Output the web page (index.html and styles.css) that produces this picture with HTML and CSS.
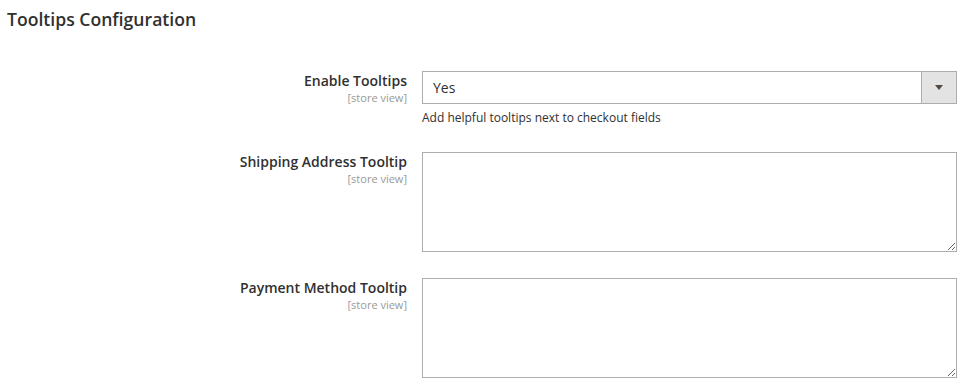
FILE: index.html
```html
<!DOCTYPE html>
<html>

<head>
    <title>Tooltips Configuration</title>
    <link rel="stylesheet" href="styles.css">
</head>

<body>
    <div class="section">
        <h2 class="section-title">Tooltips Configuration</h2>

        <div class="row">
            <div class="label">
                <span>Enable Tooltips</span>
                <span class="scope">[store view]</span>
            </div>
            <div class="value">
                <div class="select">
                    <span class="select-text">Yes</span>
                    <span class="select-btn"><span class="arrow"></span></span>
                </div>
                <p class="note">Add helpful tooltips next to checkout fields</p>
            </div>
        </div>

        <div class="row">
            <div class="label">
                <span>Shipping Address Tooltip</span>
                <span class="scope">[store view]</span>
            </div>
            <div class="value">
                <textarea class="textarea"></textarea>
            </div>
        </div>

        <div class="row">
            <div class="label">
                <span>Payment Method Tooltip</span>
                <span class="scope">[store view]</span>
            </div>
            <div class="value">
                <textarea class="textarea"></textarea>
            </div>
        </div>
    </div>
</body>

</html>
```

FILE: styles.css
```css
body {
    margin: 0;
    background-color: #fff;
    font-family: "Open Sans", Arial, sans-serif;
    color: #303030;
}

.section {
    padding: 8px 23px 0 7px;
}

.section-title {
    font-size: 17.6px;
    font-weight: 600;
    line-height: 22px;
    margin: 0 0 41px 0;
    color: #303030;
}

.row {
    display: flex;
    margin-bottom: 26px;
}

.label {
    width: 400px;
    flex-shrink: 0;
    margin-right: 15px;
    display: flex;
    flex-direction: column;
    align-items: flex-end;
    font-size: 14px;
    font-weight: 600;
    line-height: 19px;
}

.scope {
    font-size: 11px;
    font-weight: 400;
    color: #999;
    line-height: 15px;
}

.value {
    flex: 1;
}

.select {
    display: flex;
    height: 33px;
    border: 1px solid #adadad;
    box-sizing: border-box;
    background-color: #fff;
}

.select-text {
    flex: 1;
    font-size: 14px;
    line-height: 31px;
    padding-left: 10px;
}

.select-btn {
    width: 34px;
    border-left: 1px solid #adadad;
    background-color: #e3e3e3;
    display: flex;
    align-items: center;
    justify-content: center;
}

.arrow {
    width: 0;
    height: 0;
    border-left: 4px solid transparent;
    border-right: 4px solid transparent;
    border-top: 5px solid #514943;
}

.note {
    font-size: 12px;
    line-height: 16px;
    margin: 6px 0 0 0;
}

.textarea {
    display: block;
    width: 100%;
    height: 100px;
    box-sizing: border-box;
    border: 1px solid #adadad;
    border-radius: 0;
    resize: vertical;
    margin: 0;
    font-family: "Open Sans", Arial, sans-serif;
}
```
